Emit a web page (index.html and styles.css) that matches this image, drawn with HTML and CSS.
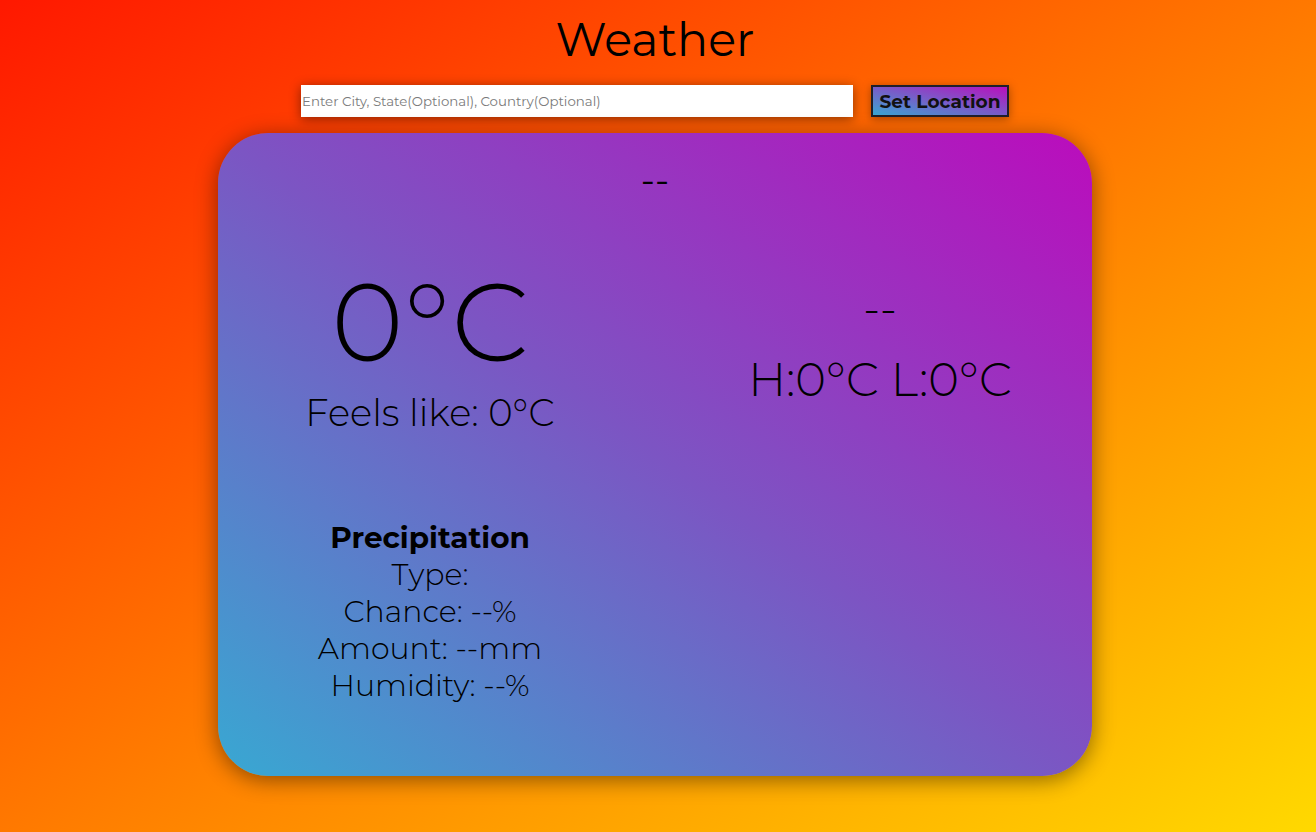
FILE: index.html
```html
<!DOCTYPE html>
<html lang="en">
<head>
<meta charset="utf-8">
<title>Weather</title>
<link rel="stylesheet" href="styles.css">
</head>
<body>
<main class="page">
  <h1 class="title">Weather</h1>
  <form class="search">
    <input class="search-input" type="text" placeholder="Enter City, State(Optional), Country(Optional)">
    <button class="search-btn" type="button">Set Location</button>
  </form>
  <section class="card">
    <div class="location">--</div>
    <div class="grid">
      <div class="col">
        <div class="temp">0°C</div>
        <div class="feels">Feels like: 0°C</div>
        <div class="precip">
          <div class="precip-title">Precipitation</div>
          <div class="line">Type:</div>
          <div class="line">Chance: --%</div>
          <div class="line">Amount: --mm</div>
          <div class="line">Humidity: --%</div>
        </div>
      </div>
      <div class="col">
        <div class="desc">--</div>
        <div class="hilo">H:0°C L:0°C</div>
      </div>
    </div>
  </section>
</main>
</body>
</html>
```

FILE: styles.css
```css
html, body {
  margin: 0;
  padding: 0;
  height: 100%;
}
body {
  background: linear-gradient(to bottom right, #ff1800, #ffd900);
  font-family: "Montserrat", "Open Sans", sans-serif;
  color: #000;
  overflow: hidden;
}
.page {
  width: 1310px;
  display: flex;
  flex-direction: column;
  align-items: center;
}
.title {
  margin: 10px 0 0 0;
  font-size: 46px;
  font-weight: 400;
  line-height: 60px;
}
.search {
  margin-top: 15px;
  display: flex;
  gap: 18px;
  align-items: center;
}
.search-input {
  box-sizing: border-box;
  width: 552px;
  height: 32px;
  border: none;
  padding: 0 1px;
  background: #fff;
  font-family: "Montserrat", sans-serif;
  font-size: 13.33px;
  box-shadow: 0 2px 12px rgba(0, 0, 0, 0.45);
  outline: none;
}
.search-input::placeholder {
  color: #7a7a7a;
}
.search-btn {
  box-sizing: border-box;
  width: 138px;
  height: 32px;
  border: 2px solid #1f1f2a;
  background: linear-gradient(to top right, #3aa7d3, #b90fbd);
  font-family: "Montserrat", "Open Sans", sans-serif;
  font-weight: 700;
  font-size: 18.5px;
  color: #111;
  padding: 0;
  box-shadow: 0 2px 10px rgba(0, 0, 0, 0.35);
}
.card {
  margin-top: 16px;
  box-sizing: border-box;
  width: 874px;
  height: 643px;
  border-radius: 50px;
  background: linear-gradient(to top right, #38a8d2, #7c55c3 50%, #bb0cbc);
  box-shadow: 0 4px 22px rgba(0, 0, 0, 0.45);
  padding-top: 30px;
  text-align: center;
}
.location {
  font-size: 37px;
  line-height: 34px;
  font-weight: 400;
}
.grid {
  display: grid;
  grid-template-columns: 1fr 1fr;
  column-gap: 26px;
}
.temp {
  margin-top: 60px;
  font-size: 110px;
  line-height: 130px;
  font-weight: 300;
}
.feels {
  margin-top: 4px;
  font-size: 37px;
  line-height: 44px;
  font-weight: 300;
}
.precip {
  margin-top: 84px;
  font-size: 30px;
  line-height: 37px;
  font-weight: 300;
}
.precip-title {
  font-size: 29.5px;
  font-weight: 700;
}
.desc {
  margin-top: 91px;
  font-size: 44px;
  line-height: 40px;
  font-weight: 300;
}
.hilo {
  margin-top: 24px;
  font-size: 46.5px;
  line-height: 56px;
  font-weight: 300;
}
```
